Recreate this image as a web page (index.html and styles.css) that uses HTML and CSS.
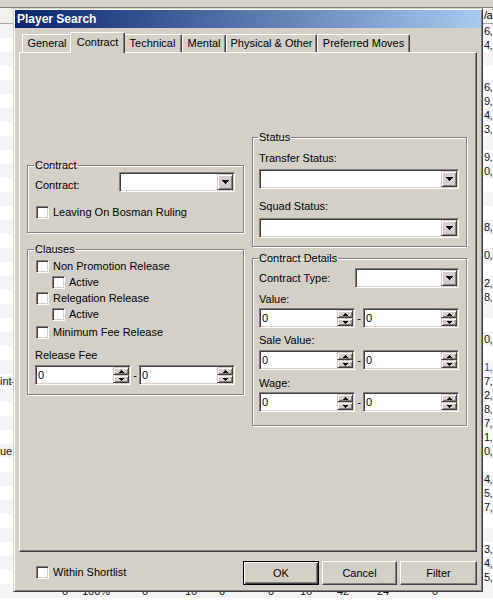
FILE: index.html
```html
<!DOCTYPE html>
<html>
<head>
<meta charset="utf-8">
<title>Player Search</title>
<link rel="stylesheet" href="styles.css">
</head>
<body>
<div class="bg">
  <div class="topbar"></div>
  <div class="hdr"><span class="v">/a</span></div>
  <div class="rows">
    <div class="r"><span class="v">6,</span></div>
    <div class="r"><span class="v">4,</span></div>
    <div class="r"></div>
    <div class="r"></div>
    <div class="r"><span class="v">6,</span></div>
    <div class="r"><span class="v">9,</span></div>
    <div class="r"><span class="v">4,</span></div>
    <div class="r"><span class="v">3,</span></div>
    <div class="r"></div>
    <div class="r"><span class="v">9,</span></div>
    <div class="r"><span class="v">0,</span></div>
    <div class="r"></div>
    <div class="r"></div>
    <div class="r"></div>
    <div class="r"><span class="v">8,</span></div>
    <div class="r"></div>
    <div class="r"><span class="v">0,</span></div>
    <div class="r"></div>
    <div class="r"><span class="v">2,</span></div>
    <div class="r"><span class="v">8,</span></div>
    <div class="r"></div>
    <div class="r"></div>
    <div class="r"><span class="v">0,</span></div>
    <div class="r"></div>
    <div class="r"><span class="v blue">1,</span></div>
    <div class="r"><span>int-</span><span class="v">7,</span></div>
    <div class="r"><span class="v">2,</span></div>
    <div class="r"><span class="v">8,</span></div>
    <div class="r"><span class="v">7,</span></div>
    <div class="r"><span class="v">1,</span></div>
    <div class="r"><span>ue</span><span class="v">0,</span></div>
    <div class="r"></div>
    <div class="r"><span class="v">4,</span></div>
    <div class="r"><span class="v">5,</span></div>
    <div class="r"><span class="v">7,</span></div>
    <div class="r"></div>
    <div class="r"></div>
    <div class="r"><span class="v">3,</span></div>
    <div class="r"><span class="v">4,</span></div>
    <div class="r"><span class="v">5,</span></div>
    <div class="r"><span></span><span>0</span><span>100%</span><span>0</span><span>16</span><span>0</span><span>0</span><span>16</span><span>42</span><span>24</span><span>0</span><span class="v"></span></div>
    <div class="r"></div>
  </div>
</div>

<div class="dialog">
  <div class="titlebar">Player Search</div>
  <div class="tabs">
    <div class="tabstrip">
      <div class="tab t-general">General</div>
      <div class="tab t-contract active">Contract</div>
      <div class="tab t-technical">Technical</div>
      <div class="tab t-mental">Mental</div>
      <div class="tab t-physical">Physical &amp; Other</div>
      <div class="tab t-moves">Preferred Moves</div>
    </div>
    <div class="panel">
      <div class="col col-left">
        <fieldset class="group g-contract">
          <legend>Contract</legend>
          <div class="frow">
            <span class="lbl">Contract:</span>
            <div class="field combo w116">
              <span class="val"></span>
              <span class="btn3d dd"><svg width="7" height="4" viewBox="0 0 7 4"><path d="M0 0h7v1H6v1H5v1H4v1H3V3H2V2H1V1H0z" fill="#000"/></svg></span>
            </div>
          </div>
          <div class="check c-bosman"><span class="cb"></span><span>Leaving On Bosman Ruling</span></div>
        </fieldset>

        <fieldset class="group g-clauses">
          <legend>Clauses</legend>
          <div class="check h16"><span class="cb"></span><span>Non Promotion Release</span></div>
          <div class="check h16 indent"><span class="cb"></span><span>Active</span></div>
          <div class="check h16"><span class="cb"></span><span>Relegation Release</span></div>
          <div class="check h16 indent"><span class="cb"></span><span>Active</span></div>
          <div class="check h16 mt2"><span class="cb"></span><span>Minimum Fee Release</span></div>
          <div class="lbl-block mt8">Release Fee</div>
          <div class="range mt3">
            <div class="field spin">
              <span class="val">0</span>
              <span class="spinbtns">
                <span class="btn3d sb"><svg width="5" height="3" viewBox="0 0 5 3"><path d="M2 0h1v1h1v1h1v1H0V2h1V1h1z" fill="#000"/></svg></span>
                <span class="btn3d sb"><svg width="5" height="3" viewBox="0 0 5 3"><path d="M0 0h5v1H4v1H3v1H2V2H1V1H0z" fill="#000"/></svg></span>
              </span>
            </div>
            <span class="dash">-</span>
            <div class="field spin">
              <span class="val">0</span>
              <span class="spinbtns">
                <span class="btn3d sb"><svg width="5" height="3" viewBox="0 0 5 3"><path d="M2 0h1v1h1v1h1v1H0V2h1V1h1z" fill="#000"/></svg></span>
                <span class="btn3d sb"><svg width="5" height="3" viewBox="0 0 5 3"><path d="M0 0h5v1H4v1H3v1H2V2H1V1H0z" fill="#000"/></svg></span>
              </span>
            </div>
          </div>
        </fieldset>
      </div>

      <div class="col col-right">
        <fieldset class="group g-status">
          <legend>Status</legend>
          <div class="lbl-block">Transfer Status:</div>
          <div class="field combo mt4">
            <span class="val"></span>
            <span class="btn3d dd"><svg width="7" height="4" viewBox="0 0 7 4"><path d="M0 0h7v1H6v1H5v1H4v1H3V3H2V2H1V1H0z" fill="#000"/></svg></span>
          </div>
          <div class="lbl-block mt10">Squad Status:</div>
          <div class="field combo mt5">
            <span class="val"></span>
            <span class="btn3d dd"><svg width="7" height="4" viewBox="0 0 7 4"><path d="M0 0h7v1H6v1H5v1H4v1H3V3H2V2H1V1H0z" fill="#000"/></svg></span>
          </div>
        </fieldset>

        <fieldset class="group g-details">
          <legend>Contract Details</legend>
          <div class="frow center">
            <span class="lbl">Contract Type:</span>
            <div class="field combo w104">
              <span class="val"></span>
              <span class="btn3d dd"><svg width="7" height="4" viewBox="0 0 7 4"><path d="M0 0h7v1H6v1H5v1H4v1H3V3H2V2H1V1H0z" fill="#000"/></svg></span>
            </div>
          </div>

          <div class="lbl-block mt4">Value:</div>
          <div class="range mt2">
            <div class="field spin">
              <span class="val">0</span>
              <span class="spinbtns">
                <span class="btn3d sb"><svg width="5" height="3" viewBox="0 0 5 3"><path d="M2 0h1v1h1v1h1v1H0V2h1V1h1z" fill="#000"/></svg></span>
                <span class="btn3d sb"><svg width="5" height="3" viewBox="0 0 5 3"><path d="M0 0h5v1H4v1H3v1H2V2H1V1H0z" fill="#000"/></svg></span>
              </span>
            </div>
            <span class="dash">-</span>
            <div class="field spin">
              <span class="val">0</span>
              <span class="spinbtns">
                <span class="btn3d sb"><svg width="5" height="3" viewBox="0 0 5 3"><path d="M2 0h1v1h1v1h1v1H0V2h1V1h1z" fill="#000"/></svg></span>
                <span class="btn3d sb"><svg width="5" height="3" viewBox="0 0 5 3"><path d="M0 0h5v1H4v1H3v1H2V2H1V1H0z" fill="#000"/></svg></span>
              </span>
            </div>
          </div>

          <div class="lbl-block mt5">Sale Value:</div>
          <div class="range mt3">
            <div class="field spin">
              <span class="val">0</span>
              <span class="spinbtns">
                <span class="btn3d sb"><svg width="5" height="3" viewBox="0 0 5 3"><path d="M2 0h1v1h1v1h1v1H0V2h1V1h1z" fill="#000"/></svg></span>
                <span class="btn3d sb"><svg width="5" height="3" viewBox="0 0 5 3"><path d="M0 0h5v1H4v1H3v1H2V2H1V1H0z" fill="#000"/></svg></span>
              </span>
            </div>
            <span class="dash">-</span>
            <div class="field spin">
              <span class="val">0</span>
              <span class="spinbtns">
                <span class="btn3d sb"><svg width="5" height="3" viewBox="0 0 5 3"><path d="M2 0h1v1h1v1h1v1H0V2h1V1h1z" fill="#000"/></svg></span>
                <span class="btn3d sb"><svg width="5" height="3" viewBox="0 0 5 3"><path d="M0 0h5v1H4v1H3v1H2V2H1V1H0z" fill="#000"/></svg></span>
              </span>
            </div>
          </div>

          <div class="lbl-block mt6">Wage:</div>
          <div class="range mt2">
            <div class="field spin">
              <span class="val">0</span>
              <span class="spinbtns">
                <span class="btn3d sb"><svg width="5" height="3" viewBox="0 0 5 3"><path d="M2 0h1v1h1v1h1v1H0V2h1V1h1z" fill="#000"/></svg></span>
                <span class="btn3d sb"><svg width="5" height="3" viewBox="0 0 5 3"><path d="M0 0h5v1H4v1H3v1H2V2H1V1H0z" fill="#000"/></svg></span>
              </span>
            </div>
            <span class="dash">-</span>
            <div class="field spin">
              <span class="val">0</span>
              <span class="spinbtns">
                <span class="btn3d sb"><svg width="5" height="3" viewBox="0 0 5 3"><path d="M2 0h1v1h1v1h1v1H0V2h1V1h1z" fill="#000"/></svg></span>
                <span class="btn3d sb"><svg width="5" height="3" viewBox="0 0 5 3"><path d="M0 0h5v1H4v1H3v1H2V2H1V1H0z" fill="#000"/></svg></span>
              </span>
            </div>
          </div>
        </fieldset>
      </div>
    </div>
  </div>
  <div class="footer">
    <div class="check f-check"><span class="cb"></span><span>Within Shortlist</span></div>
    <div class="buttons">
      <button class="btn btn-ok" type="button">OK</button>
      <button class="btn btn-cancel" type="button">Cancel</button>
      <button class="btn btn-filter" type="button">Filter</button>
    </div>
  </div>
</div>
</body>
</html>
```

FILE: styles.css
```css
* { box-sizing: border-box; }
html, body { margin: 0; padding: 0; }
body {
  width: 493px;
  height: 600px;
  overflow: hidden;
  position: relative;
  background: #fff;
  font-family: "Liberation Sans", Arial, sans-serif;
  font-size: 11px;
  color: #000;
}

/* background table */
.bg { width: 493px; height: 600px; overflow: hidden; }
.topbar { height: 8px; background: #d4d0c8; border-bottom: 1px solid #808080; }
.hdr, .r {
  display: grid;
  grid-template-columns: 62px 20px 60px 43px 34px 49px 32px 37px 40px 55px 52px 9px;
  white-space: nowrap;
}
.hdr { height: 16px; line-height: 15px; background: #f1f0ec; border-bottom: 1px solid #a8a8a8; }
.r { height: 14px; line-height: 14px; color: #111; }
.r:nth-child(odd) { background: #f5f5f5; }
.v { grid-column: 12; letter-spacing: -0.5px; }
.blue { color: #2a56b0; }

/* dialog */
.dialog {
  position: absolute;
  left: 13px;
  top: 8px;
  width: 470px;
  height: 584px;
  background: #d4d0c8;
  border: 1px solid;
  border-color: #d4d0c8 #404040 #404040 #d4d0c8;
  box-shadow: inset 1px 1px 0 #fff, inset -1px -1px 0 #808080;
  padding: 1px;
  display: flex;
  flex-direction: column;
}
.titlebar {
  flex: none;
  height: 18px;
  line-height: 18px;
  padding-left: 2px;
  font-weight: bold;
  font-size: 12px;
  color: #fff;
  background: linear-gradient(to right, #0a246a, #a6caf0);
}

.tabs { flex: none; margin: 0 4px; }
.tabstrip { height: 24px; display: flex; align-items: flex-end; padding-left: 3px; }
.tab {
  flex: none;
  height: 18px;
  line-height: 17px;
  text-align: center;
  white-space: nowrap;
  background: #d4d0c8;
  border: 1px solid;
  border-bottom: none;
  border-color: #fff #404040 #404040 #fff;
  box-shadow: inset -1px 0 0 #808080;
  border-radius: 2px 2px 0 0;
}
.tab.active {
  height: 21px;
  line-height: 18px;
  margin: 0 -2px -1px;
  position: relative;
  z-index: 1;
}
.t-general { width: 50px; }
.t-contract { width: 55px; }
.t-technical { width: 59px; }
.t-mental { width: 44px; }
.t-physical { width: 91px; }
.t-moves { width: 93px; }

.panel {
  height: 500px;
  border: 1px solid;
  border-color: #fff #404040 #404040 #fff;
  box-shadow: inset -1px -1px 0 #808080;
  display: flex;
  gap: 8px;
  padding: 0 9px 0 7px;
}
.col-left { width: 217px; padding-top: 105px; }
.col-right { width: 215px; padding-top: 77px; }

.group {
  margin: 0;
  min-width: 0;
  border: 1px solid #808080;
  box-shadow: inset 1px 1px 0 #fff, 1px 1px 0 #fff;
}
.group legend {
  padding: 0 1px;
  margin-left: -1px;
  line-height: 14px;
  font-size: 11px;
}
.g-contract { padding: 0 8px 13px 7px; }
.g-clauses { margin-top: 9px; padding: 2px 8px 9px 7px; }
.g-status { padding: 7px 7px 8px 6px; }
.g-details { margin-top: 4px; padding: 3px 7px 13px 6px; }

.frow { display: flex; height: 20px; align-items: flex-end; }
.frow.center { align-items: center; }
.lbl, .lbl-block { line-height: 14px; white-space: nowrap; }
.w116 { width: 116px; margin-left: auto; }
.w104 { width: 104px; margin-left: auto; }

.check { display: flex; align-items: center; height: 14px; white-space: nowrap; }
.check.h16 { height: 16px; }
.check.indent { padding-left: 16px; }
.c-bosman { margin-top: 13px; }
.cb {
  flex: none;
  width: 13px;
  height: 13px;
  margin: 0 4px 0 1px;
  background: #fff;
  border: 1px solid;
  border-color: #808080 #fff #fff #808080;
  box-shadow: inset 1px 1px 0 #404040, inset -1px -1px 0 #d4d0c8;
}

.mt2 { margin-top: 2px; }
.mt3 { margin-top: 3px; }
.mt4 { margin-top: 4px; }
.mt5 { margin-top: 5px; }
.mt6 { margin-top: 6px; }
.mt8 { margin-top: 8px; }
.mt10 { margin-top: 10px; }

.field {
  height: 20px;
  background: #fff;
  border: 1px solid;
  border-color: #808080 #fff #fff #808080;
  box-shadow: inset 1px 1px 0 #404040, inset -1px -1px 0 #d4d0c8;
  padding: 1px;
  display: flex;
  align-items: stretch;
}
.val { flex: 1; padding-left: 1px; line-height: 16px; }
.btn3d {
  background: #d4d0c8;
  border: 1px solid;
  border-color: #d4d0c8 #404040 #404040 #d4d0c8;
  box-shadow: inset 1px 1px 0 #fff, inset -1px -1px 0 #808080;
  display: flex;
  align-items: center;
  justify-content: center;
}
.btn3d svg { display: block; }
.dd { width: 16px; height: 16px; flex: none; }
.spinbtns { width: 16px; flex: none; display: flex; flex-direction: column; }
.sb { height: 8px; }

.range { display: grid; grid-template-columns: 96px 8px 96px; }
.dash { text-align: center; line-height: 20px; }

.footer {
  flex: 1;
  display: flex;
  justify-content: space-between;
  align-items: flex-start;
  padding: 0 4px 0 20px;
}
.f-check { margin-top: 13px; }
.buttons { margin-top: 9px; display: flex; gap: 3px; }
.btn {
  height: 24px;
  padding: 0;
  font: inherit;
  color: #000;
  background: #d4d0c8;
  border: 1px solid;
  border-color: #fff #404040 #404040 #fff;
  box-shadow: inset -1px -1px 0 #808080;
  text-align: center;
}
.btn-ok {
  width: 76px;
  border: 1px solid #000;
  box-shadow: inset 1px 1px 0 #fff, inset -1px -1px 0 #404040, inset -2px -2px 0 #808080;
}
.btn-cancel { width: 75px; }
.btn-filter { width: 77px; }
```
